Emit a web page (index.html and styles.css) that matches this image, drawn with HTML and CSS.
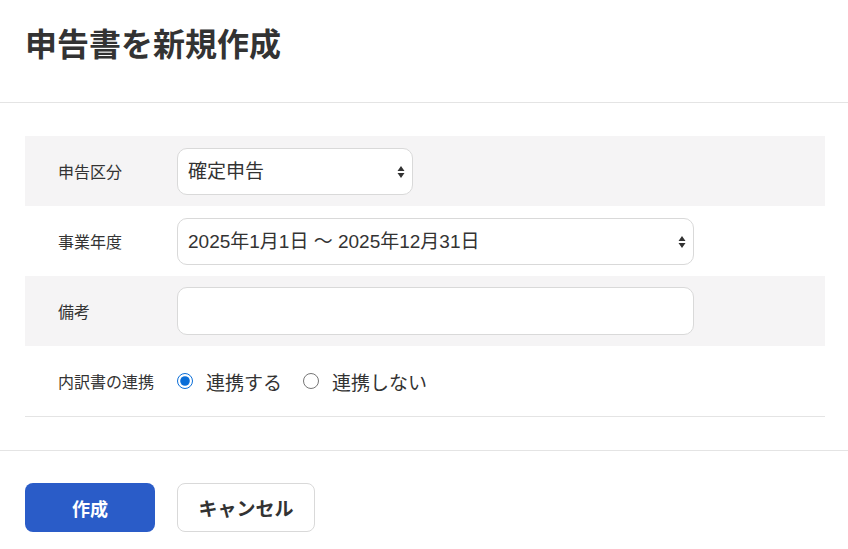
FILE: index.html
```html
<!DOCTYPE html>
<html lang="ja">
<head>
    <meta charset="UTF-8">
    <meta name="viewport" content="width=device-width, initial-scale=1.0">
    <title>申告書を新規作成</title>
    <link rel="stylesheet" href="styles.css">
</head>
<body>
    <header class="encabezado">
        <h1>申告書を新規作成</h1>
    </header>

    <!-- Formulario principal -->
    <section class="cuerpo">
        <div class="fila gris">
            <label class="etiqueta">申告区分</label>
            <div class="selector corto">
                <select>
                    <option>確定申告</option>
                    <option>中間申告</option>
                </select>
                <svg class="flechas" width="8" height="14" viewBox="0 0 8 14"><path d="M4 1L7.5 6H0.5Z M4 13L7.5 8H0.5Z" fill="#333"/></svg>
            </div>
        </div>
        <div class="fila">
            <label class="etiqueta">事業年度</label>
            <div class="selector largo">
                <select>
                    <option>2025年1月1日 ～ 2025年12月31日</option>
                </select>
                <svg class="flechas" width="8" height="14" viewBox="0 0 8 14"><path d="M4 1L7.5 6H0.5Z M4 13L7.5 8H0.5Z" fill="#333"/></svg>
            </div>
        </div>
        <div class="fila gris">
            <label class="etiqueta">備考</label>
            <input type="text" class="campo largo">
        </div>
        <div class="fila ultima">
            <label class="etiqueta">内訳書の連携</label>
            <div class="opciones">
                <label class="opcion"><input type="radio" name="renkei" checked> 連携する</label>
                <label class="opcion"><input type="radio" name="renkei"> 連携しない</label>
            </div>
        </div>
    </section>

    <footer class="pie">
        <button class="primario">作成</button>
        <button class="secundario">キャンセル</button>
    </footer>
</body>
</html>
```

FILE: styles.css
```css
body {
    font-family: "Liberation Sans", "Noto Sans CJK JP", sans-serif;
    background-color: #fff;
    color: #333;
    margin: 0;
    padding: 0;
}
.encabezado {
    padding: 22px 25px 0;
    height: 80px;
    border-bottom: 1px solid #e4e4e4;
}
h1 {
    margin: 0;
    font-size: 32px;
    font-family: "Noto Sans CJK JP", sans-serif;
    font-weight: bold;
    line-height: 40px;
    color: #333;
}
.cuerpo {
    padding: 33px 23px 33px 25px;
    border-bottom: 1px solid #e4e4e4;
}
.fila {
    display: flex;
    align-items: center;
    height: 70px;
    padding-left: 33px;
}
.gris {
    background-color: #f5f4f5;
}
.ultima {
    border-bottom: 1px solid #e4e4e4;
}
.etiqueta {
    width: 119px;
    font-size: 16px;
    font-family: "Noto Sans CJK JP", sans-serif;
    color: #333;
}
.selector {
    position: relative;
    height: 47px;
}
.selector select {
    appearance: none;
    width: 100%;
    height: 100%;
    border: 1px solid #d9d9d9;
    border-radius: 10px;
    background-color: #fff;
    padding: 0 30px 0 10px;
    font-family: inherit;
    font-size: 19px;
    color: #333;
}
.flechas {
    position: absolute;
    right: 8px;
    top: 17px;
}
.corto {
    width: 236px;
}
.largo {
    width: 517px;
}
.campo {
    box-sizing: border-box;
    height: 48px;
    border: 1px solid #d9d9d9;
    border-radius: 10px;
    background-color: #fff;
}
.opciones {
    display: flex;
    gap: 21px;
}
.opcion {
    display: flex;
    align-items: center;
    gap: 13px;
    font-size: 19px;
    color: #333;
}
.opcion input {
    margin: 0;
    width: 16px;
    height: 16px;
    accent-color: #0a6ed8;
}
.pie {
    display: flex;
    gap: 22px;
    padding: 32px 25px;
}
button {
    height: 49px;
    border-radius: 8px;
    font-family: "Noto Sans CJK JP", sans-serif;
    font-size: 19px;
    font-weight: bold;
    cursor: pointer;
}
.primario {
    width: 130px;
    background-color: #2a5cc8;
    color: white;
    border: none;
    font-size: 18px;
}
.secundario {
    width: 138px;
    background-color: #fff;
    color: #333;
    border: 1px solid #d9d9d9;
}
```
